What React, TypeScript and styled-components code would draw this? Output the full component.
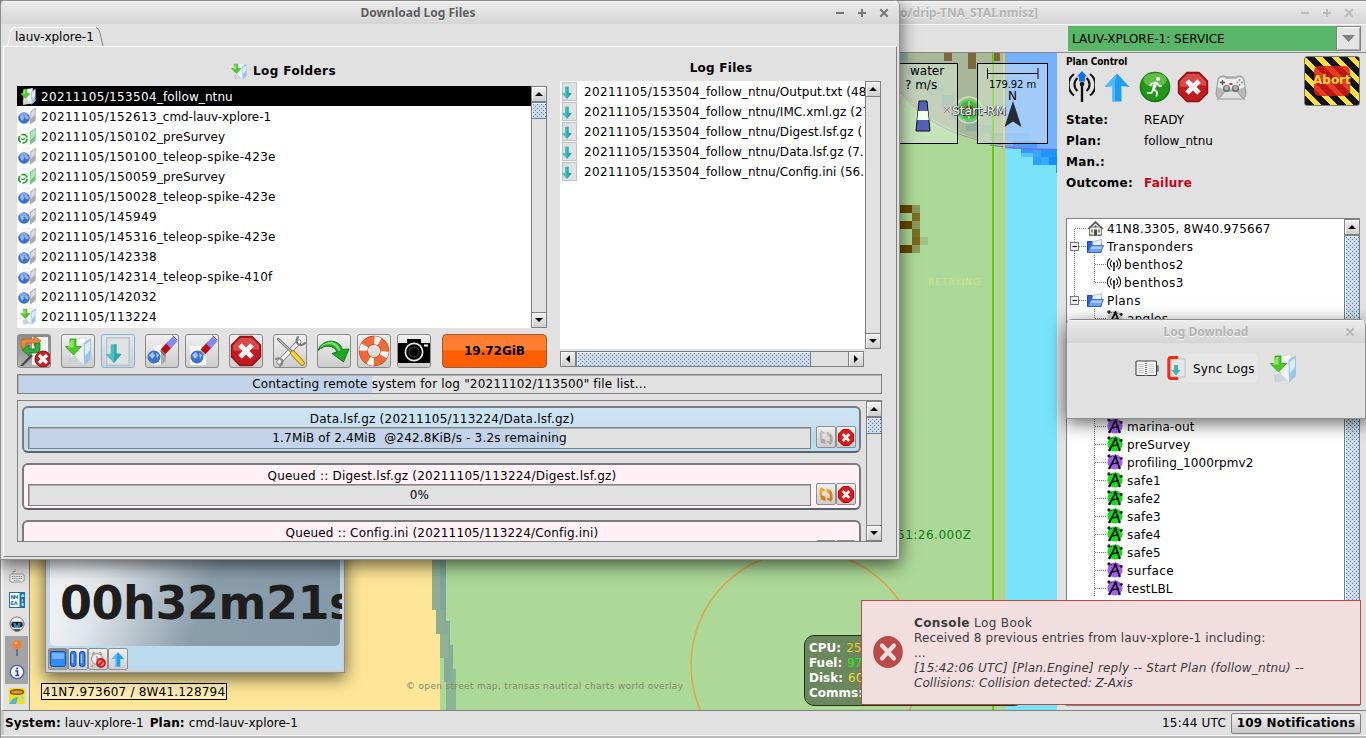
import React from "react";
import styled, { createGlobalStyle, css } from "styled-components";

const GlobalStyle = createGlobalStyle`
  html, body { margin: 0; padding: 0; }
  body {
    width: 1366px;
    height: 738px;
    overflow: hidden;
    font-family: "DejaVu Sans", sans-serif;
    font-size: 12px;
    color: #000;
  }
  *, *::before, *::after { box-sizing: border-box; }
  svg { display: block; flex: none; }
`;

/* A run of text with its own tracking. */
const Run = styled.span<{ $ls: number }>`
  padding-top: 2px;
  letter-spacing: ${(p) => p.$ls}px;
`;

/* ---------- window frames ---------- */

const Desktop = styled.div`
  position: relative;
  width: 1366px;
  height: 738px;
  overflow: hidden;
  background: #e1e1e1;
`;

const MainWindow = styled.div`
  display: grid;
  grid-template-rows: 24px 28px 658px 25px 3px;
  width: 1366px;
  height: 738px;
  border-left: 1px solid #8f8f8f;
`;

const TitleBar = styled.div`
  display: flex;
  align-items: center;
  height: 24px;
  border-top: 1px solid #8c8c8c;
  background: linear-gradient(#f6f6f6 0, #e9e9e9 2px, #d5d5d5 100%);
  font-family: "Noto Sans", "Open Sans", sans-serif;
  font-weight: 700;
  font-size: 12px;
  color: #b4b4b4;
  text-shadow: 0 1px 0 #f4f4f4;
  white-space: pre;
`;

const ActiveTitleBar = styled(TitleBar)`
  color: #5c5c5c;
`;

const TitleText = styled.span<{ $center?: number; $right?: number }>`
  ${(p) => p.$center && css`width: ${p.$center * 2}px; text-align: center;`}
  ${(p) => p.$right && css`width: ${p.$right}px; text-align: right;`}
  line-height: 22px;
  padding-top: 1px;
  flex: none;
`;

const TitleButtons = styled.div<{ $end: number }>`
  display: flex;
  gap: 12px;
  margin-left: auto;
  padding: 1px ${(p) => p.$end}px 0 0;
`;

const WinGlyph = ({ kind, color }: { kind: "min" | "max" | "close"; color: string }) => (
  <svg width="10" height="10" viewBox="0 0 10 10" stroke={color} strokeWidth="2" fill="none">
    {kind === "min" && <path d="M1 5H9" />}
    {kind === "max" && <path d="M1 5H9M5 1V9" />}
    {kind === "close" && <path d="M1.3 1.3L8.7 8.7M8.7 1.3L1.3 8.7" />}
  </svg>
);

const Float = styled.div<{ $x: number; $y: number; $w: number; $h: number }>`
  position: absolute;
  left: ${(p) => p.$x}px;
  top: ${(p) => p.$y}px;
  width: ${(p) => p.$w}px;
  height: ${(p) => p.$h}px;
`;

const DialogFrame = styled(Float)`
  border: 1px solid #8f8f8f;
  border-top: 0;
  border-radius: 6px 6px 0 0;
  overflow: hidden;
  background: #e1e1e1;
`;

const DialogShadow = styled(Float)`
  border-radius: 6px 6px 0 0;
  box-shadow: 0 5px 18px rgba(0, 0, 0, 0.62);
`;

/* ---------- scrollbars ---------- */

const Bar = styled.div<{ $dir: "v" | "h" }>`
  display: flex;
  flex-direction: ${(p) => (p.$dir === "v" ? "column" : "row")};
  ${(p) => (p.$dir === "v" ? "width: 16px;" : "height: 16px;")}
  flex: none;
  border: 1px solid #808080;
  background: #e1e1e1;
`;

const BarButton = styled.div`
  display: flex;
  align-items: center;
  justify-content: center;
  width: 14px;
  height: 14px;
  flex: none;
  background: linear-gradient(#f2f2f2, #cfcfcf);
  box-shadow: 0 0 0 1px #808080, inset 1px 1px 0 #fff;
`;

const Thumb = styled.div<{ $dir: "v" | "h"; $before: number; $size: number }>`
  flex: none;
  ${(p) =>
    p.$dir === "v"
      ? css`margin-top: ${p.$before}px; height: ${p.$size}px;`
      : css`margin-left: ${p.$before}px; width: ${p.$size}px;`}
  box-shadow: 0 0 0 1px #6d7f95, inset 1px 1px 0 #eef5fb;
  background-color: #cddbea;
  background-image:
    radial-gradient(circle at 1.5px 1.5px, #5f7b99 0.5px, transparent 0.7px),
    radial-gradient(circle at 3.5px 3.5px, #5f7b99 0.5px, transparent 0.7px);
  background-size: 4px 4px;
`;

const Spring = styled.div`
  flex: 1;
`;

const arrows = { up: "M0 4L4 0L8 4Z", down: "M0 0L8 0L4 4Z", left: "M4 0V8L0 4Z", right: "M0 0L4 4L0 8Z" };
const Arrow = ({ to }: { to: keyof typeof arrows }) => {
  const v = to === "up" || to === "down";
  return (
    <svg width={v ? 8 : 4} height={v ? 4 : 8}>
      <path d={arrows[to]} fill="#000" />
    </svg>
  );
};

const Scrollbar = ({ dir, before, size }: { dir: "v" | "h"; before: number; size: number }) => (
  <Bar $dir={dir}>
    <BarButton><Arrow to={dir === "v" ? "up" : "left"} /></BarButton>
    {size > 0 && <Thumb $dir={dir} $before={before} $size={size} />}
    <Spring />
    <BarButton><Arrow to={dir === "v" ? "down" : "right"} /></BarButton>
  </Bar>
);

/* ---------- icons ---------- */

const DownFolder = ({ w = 16, h = 17 }: { w?: number; h?: number }) => (
  <svg width={w} height={h} viewBox="0 0 26 29">
    <path d="M6 3L21 .5L20 26L5 28Z" fill="#fbfbfb" stroke="#d0d4d6" strokeWidth=".8" />
    <path d="M4 21L12 17L18 19V26L5 28Z" fill="#c4cacd" opacity=".8" />
    <path d="M12 3L20 6L19 28L11 20Z" fill="#eff1f2" />
    <path d="M18.500 6L26 1V22L19 28.500Z" fill="#9cc3e8" />
    <path d="M19.500 8L25 4V13L20 19Z" fill="#dcebf8" />
    <path d="M5 2H11V9.500H16.500L8.500 18L.3 9.500H5Z" fill="#4ec824" stroke="#2f9a12" strokeWidth=".8" />
    <path d="M6 3H8.500V10.500H3Z" fill="#a4ec7c" opacity=".8" />
  </svg>
);

const GlobeFolder = () => (
  <svg width="18" height="18" viewBox="0 0 18 18">
    <path d="M5 2L12 .5V17L5 17Z" fill="#f7f7f7" stroke="#e8e8e8" strokeWidth=".5" />
    <path d="M12 5L17.700 .5V13.500L12 17.800Z" fill="#ababab" />
    <path d="M12.500 6L17 2V8L12.500 12Z" fill="#dadada" />
    <circle cx="6" cy="11" r="5.800" fill="#3d73c6" />
    <ellipse cx="5.500" cy="8" rx="4" ry="2.300" fill="#8db3ea" opacity=".8" />
    <path d="M2 10L4.500 9L6 11.500L4 14ZM7.500 9L10.500 9.500L10 12.500L7.500 11.500Z" fill="#b9d0f2" opacity=".8" />
  </svg>
);

const SyncFolder = () => (
  <svg width="18" height="18" viewBox="0 0 18 18">
    <path d="M5 2L12 .5V17L5 17Z" fill="#f8faf8" stroke="#e6ebe6" strokeWidth=".5" />
    <path d="M12 5L17.700 .5V13.500L12 17.800Z" fill="#6fc580" />
    <path d="M12.500 6L17 2V9L12.500 13Z" fill="#b3e4ba" />
    <circle cx="5" cy="11.700" r="4.200" fill="#eefaee" stroke="#2c9a34" strokeWidth="1.700" strokeDasharray="7 1.800" />
    <path d="M2.500 10.500L4 13H6.300L7.500 10.500L5 12Z" fill="#2c9a34" />
  </svg>
);

const FileArrow = ({ w = 15, h = 19 }: { w?: number; h?: number }) => (
  <svg width={w} height={h} viewBox="0 0 23 28" preserveAspectRatio="none">
    <rect x=".7" y=".7" width="21.600" height="26.600" fill="#dfe1e2" stroke="#bcc0c4" strokeWidth="1.400" />
    <path d="M4.500 7H10V16L15 16.500L7.500 25L0 17L4.500 16Z" fill="#46c0c0" />
    <path d="M8 7H10V16L15 16.500L7.500 25Z" fill="#2fa6a8" />
  </svg>
);

const StopSign = ({ s = 32 }: { s?: number }) => (
  <svg width={s} height={s} viewBox="0 0 32 32">
    <path d="M10 1.500H22L30.500 10V22L22 30.500H10L1.500 22V10Z" fill="#c21a1f" stroke="#8f1216" strokeWidth="1.400" />
    <path d="M10.500 3H21.500L29 10.500V15C20 12 12 18 3 15V10.500Z" fill="#e25a5a" opacity=".75" />
    <path d="M10 10L22 22M22 10L10 22" stroke="#f4f4f4" strokeWidth="5" />
  </svg>
);

const SmallStop = () => (
  <svg width="16" height="17" viewBox="0 0 16 17">
    <path d="M5 .5H11L15.500 5V12L11 16.500H5L.5 12V5Z" fill="#e51515" stroke="#9e0a0a" />
    <path d="M4.800 5L11.200 12M11.200 5L4.800 12" stroke="#fff" strokeWidth="2.600" />
  </svg>
);

const Refresh = ({ color, dark }: { color: string; dark: string }) => (
  <svg width="16" height="17" viewBox="0 0 16 17" fill="none">
    <path d="M4.500 11.500A5 5 0 0 1 3.500 5" stroke={color} strokeWidth="2.800" />
    <path d="M.8 5.500L3 1L8 4.500Z" fill={color} />
    <path d="M8.500 2.500L13 4L12 8.500L8.500 6Z" fill={color} />
    <path d="M11.500 5.500A5 5 0 0 1 12.500 12" stroke={dark} strokeWidth="2.800" />
    <path d="M15.200 11.500L13 16L8 12.500Z" fill={dark} />
    <path d="M7.500 15L2.500 13.500L3.500 9L7.500 11Z" fill={dark} />
  </svg>
);

const Eraser = () => (
  <>
    <path d="M17 17L24 9" stroke="#c00d12" strokeWidth="6.500" />
    <path d="M22.500 11L29 4" stroke="#8484fb" strokeWidth="6.500" />
    <path d="M14 15.500L19 20.500M26.500 .8L31.500 5.200" stroke="#202060" strokeWidth=".8" />
  </>
);

const GlobeErase = ({ folder }: { folder: boolean }) => (
  <svg width="32" height="32" viewBox="0 0 32 32">
    <path d={folder ? "M8 12L16 9V29L8 30Z" : "M4 11H20V30H4Z"} fill="#f8f8f8" />
    {folder && <path d="M15 16L20 12V26L15 30Z" fill="#a9a9a9" />}
    <circle cx={folder ? 8 : 11} cy="22" r="6.500" fill="#3e73c4" />
    <path
      d={folder ? "M3 20L7 17L9 21L6 24ZM10 18L13 20L11 24Z" : "M6 20L10 17L12 21L9 24ZM13 18L16 20L14 24Z"}
      fill="#a4c2ef"
    />
    <Eraser />
  </svg>
);

const Tools = () => (
  <svg width="32" height="32" viewBox="0 0 32 32" fill="none" strokeLinecap="round">
    <path d="M5 27L25 7" stroke="#777" strokeWidth="5" />
    <path d="M5 27L25 7" stroke="#f2f2f2" strokeWidth="3.400" />
    <path d="M24 2A5.500 5.500 0 0 0 24 9A5.500 5.500 0 0 0 31 8" stroke="#777" strokeWidth="2" />
    <path d="M8 25A5 5 0 0 0 2 24M8 25A5 5 0 0 1 6 31" stroke="#888" strokeWidth="2" />
    <path d="M4 4L18 17" stroke="#777" strokeWidth="2.600" />
    <path d="M4 4L18 17" stroke="#ddd" strokeWidth="1" />
    <path d="M19 18L28 28" stroke="#a87308" strokeWidth="5.500" />
    <path d="M19 18L28 28" stroke="#ffc928" strokeWidth="4" />
    <path d="M18.500 18.500L27 28" stroke="#fff2a8" strokeWidth="1" />
  </svg>
);

const GreenTurn = () => (
  <svg width="34" height="32" viewBox="0 0 34 32">
    <path d="M1 15.500C5 3.500 22 3 25.500 14.500L32 14L26.500 27L15 18.500L20 17C17 10 8 9 1 15.500Z" fill="#1fa827" stroke="#14781a" />
    <path d="M2.500 13.500C8 5 20 4.500 23.500 15L21.500 16C17 7 9 8 2.500 13.500Z" fill="#7fdc70" />
  </svg>
);

const LifeRing = () => (
  <svg width="32" height="32" viewBox="0 0 32 32" fill="none">
    <circle cx="16" cy="16" r="10.700" stroke="#b64e25" strokeWidth="9" />
    <circle cx="16" cy="16" r="10.700" stroke="#ee6a39" strokeWidth="7.600" />
    <circle
      cx="16" cy="16" r="10.700" stroke="#fafafa" strokeWidth="8"
      strokeDasharray="5.400 11.400" strokeDashoffset="2.700" transform="rotate(15 16 16)"
    />
  </svg>
);

const Camera = () => (
  <svg width="34" height="32" viewBox="0 0 34 32">
    <path d="M1 8H10V4H24V8H33V28H1Z" fill="#000" />
    <path d="M27 10.500H31" stroke="#fff" strokeWidth="2" />
    <circle cx="17" cy="17" r="9.500" fill="#e8e8e8" />
    <circle cx="17" cy="17" r="7.800" fill="#000" />
    <circle cx="17" cy="17" r="5" fill="none" stroke="#444" strokeWidth="1" />
  </svg>
);

const SwapOff = () => (
  <svg width="32" height="32" viewBox="0 0 32 32">
    <path d="M14 2H30V30H14Z" fill="#f3f3f3" />
    <path d="M2 31L13 19L15 21L5 31Z" fill="#4c4c4c" />
    <path d="M3 13V6Q4 4 8 4H16V1L23 6L16 11V8H8V13Z" fill="#e9883b" stroke="#b55f1c" strokeWidth=".8" />
    <path d="M22 8V15Q21 18 17 18H11V21L4 15L11 10V14H17V8Z" fill="#2fae3b" stroke="#187a22" strokeWidth=".8" />
    <circle cx="25" cy="24" r="8" fill="#cc1b22" stroke="#991015" />
    <path d="M21 20L29 28M29 20L21 28" stroke="#fff" strokeWidth="3.400" />
  </svg>
);

const Antenna = ({ arrow }: { arrow?: boolean }) => (
  <svg
    width={arrow ? 26 : 14} height={arrow ? 32 : 14}
    viewBox={arrow ? "0 0 26 32" : "0 0 26 28"} fill="none" stroke="#111"
  >
    <path d="M13 13V31" strokeWidth={arrow ? 2.4 : 3} />
    <circle cx="13" cy="13" r="2.300" fill="#111" stroke="none" />
    <path d="M8.500 7A8.500 8.500 0 0 0 8.500 20M17.500 7A8.500 8.500 0 0 1 17.500 20" strokeWidth="2.100" />
    <path d="M5 3A13.500 13.500 0 0 0 5 24.500M21 3A13.500 13.500 0 0 1 21 24.500" strokeWidth="2.100" />
    {arrow && <path d="M13 0L18 5.500H16V10.500H10V5.500H8Z" fill="#0b6ff0" stroke="none" />}
  </svg>
);

const UpArrow = ({ w = 26, h = 29 }: { w?: number; h?: number }) => (
  <svg width={w} height={h} viewBox="0 0 26 29">
    <path d="M13 .5L25.500 14L17.500 13V28.500H8.500V13L.5 14Z" fill="#1f9df2" />
    <path d="M13 .5L.5 14L8.500 13V28.500H11V8Z" fill="#4fbcfa" />
  </svg>
);

const Runner = () => (
  <svg width="32" height="32" viewBox="0 0 32 32">
    <circle cx="16" cy="16" r="15.300" fill="#14780d" />
    <circle cx="16" cy="15.500" r="14" fill="#23961a" />
    <ellipse cx="16" cy="9" rx="11.500" ry="7" fill="#7acb5e" opacity=".7" />
    <circle cx="19" cy="8" r="2" fill="#fff" />
    <path d="M17.500 11L14.500 18L18 21L17.500 25.500M14.500 18L12.500 22H8M17.500 11.500L12.500 12.500L11 15M18 12L20.500 15H23" stroke="#fff" strokeWidth="1.700" fill="none" />
    <path d="M17 11L14.500 18" stroke="#fff" strokeWidth="3" />
  </svg>
);

const Gamepad = () => (
  <svg width="32" height="28" viewBox="0 0 32 28">
    <path d="M3 7C3 3 9 2 11 4H21C23 2 29 3 29 7L31 20C31 26 27 26 25 22L22 18H10L7 22C5 26 1 26 1 20Z" fill="#b9b9b9" stroke="#8c8c8c" strokeWidth=".8" />
    <path d="M4 7C5 4 9 4 11 6H21C23 4 27 4 28 7L29.500 14L24 16H8L2.500 14Z" fill="#efefef" />
    <circle cx="11.500" cy="15.500" r="3.600" fill="#707070" />
    <circle cx="20.500" cy="15.500" r="3.600" fill="#707070" />
    <circle cx="11.500" cy="15" r="2.200" fill="#b4b4b4" />
    <circle cx="20.500" cy="15" r="2.200" fill="#b4b4b4" />
    <path d="M5 9.500H10M7.500 7V12" stroke="#555" strokeWidth="1.400" />
    <path d="M24.500 6V8M24.500 11V13M21.500 9.500H23M26 9.500H28" stroke="#888" strokeWidth="1.600" />
    <rect x="14.500" y="10" width="3" height="2" fill="#c33" />
    <path d="M2 26H30" stroke="#777" strokeWidth="2" opacity=".35" />
  </svg>
);

const House = () => (
  <svg width="17" height="16" viewBox="0 0 17 16">
    <rect x="2.500" y="7" width="12" height="8.500" fill="#ecece6" stroke="#6b6b66" strokeWidth=".8" />
    <path d="M.5 8.500L8.500 .8L16.500 8.500L15 9.500L8.500 3.500L2 9.500Z" fill="#5e605e" />
    <rect x="7" y="9.500" width="3" height="6" fill="#4d4d4d" />
    <rect x="4" y="9.500" width="2" height="3" fill="#86966f" />
    <rect x="11" y="9.500" width="2" height="3" fill="#86966f" />
    <circle cx="8.500" cy="6.300" r="1.100" fill="#555" />
    <path d="M2 15H6M11 15H15" stroke="#587a3b" />
  </svg>
);

const FolderOpen = () => (
  <svg width="17" height="14" viewBox="0 0 17 14">
    <path d="M.5 13.500V2.500H5L6.500 4H14V13.500Z" fill="#2f63d8" stroke="#1e49ae" />
    <path d="M6 2.500L14.500 .5L14 7H5Z" fill="#e8f0fc" stroke="#7f9fd8" strokeWidth=".6" />
    <path d="M.8 13.500L4 6.500H16.500L13.500 13.500Z" fill="#6fa4f2" stroke="#2d62cc" strokeWidth=".8" />
    <path d="M4.500 7.500H15L14 10H3.500Z" fill="#a9cbfa" />
  </svg>
);

const PlanIcon = ({ color }: { color: string }) => (
  <svg width="16" height="16" viewBox="0 0 16 16" fill="none">
    <circle cx="8" cy="8" r="7.600" fill={color} />
    <path d="M2.500 14L8.500 2.500L12.500 14M5 10L12 8.500" stroke="#111" strokeWidth="1.700" />
    <path d="M2 2L8 3L14 4.500" stroke="#111" strokeWidth=".7" strokeDasharray="1 1" />
    <circle cx="2" cy="2" r="1.700" fill="#222" />
    <circle cx="14.300" cy="4.500" r="1.400" fill="#222" />
    <circle cx="2.500" cy="14" r="1.300" fill="#111" />
    <circle cx="12.500" cy="14" r="1.200" fill="#111" />
    <circle cx="8.500" cy="2.500" r="1.100" fill="#111" />
  </svg>
);

const BookIcon = () => (
  <svg width="24" height="17" viewBox="0 0 24 17" fill="none" stroke="#444">
    <rect x="1" y="1" width="20.500" height="14.500" rx="1" fill="#f8f8f8" strokeWidth="1.100" />
    <path d="M11 1V16" strokeWidth="2.400" strokeDasharray="1 1" stroke="#777" />
    <path d="M3 4.500H9M3 6.500H9M3 8.500H9M3 10.500H9M3 12.500H9M13.500 4.500H19M13.500 6.500H19M13.500 8.500H19M13.500 10.500H19M13.500 12.500H19" stroke="#bdbdbd" strokeWidth=".8" />
    <path d="M21.500 6H23V11H21.500" strokeWidth="1.100" />
  </svg>
);

const SyncIcon = () => (
  <svg width="19" height="24" viewBox="0 0 19 24">
    <rect x="4" y="3" width="14" height="18" fill="#e3e7e8" stroke="#b9bcbe" />
    <path d="M11 1.500H4Q1.800 1.500 1.800 4V20Q1.800 22.500 4 22.500H11" fill="none" stroke="#fb2510" strokeWidth="3" />
    <path d="M7 9H11V14H13.500L9 19.500L4.500 14H7Z" fill="#3cb4b4" />
  </svg>
);

/* ---------- download dialog ---------- */

const DialogBody = styled.div`
  display: flex;
  flex-direction: column;
  height: 533px;
  margin: 0 2px 2px;
`;

const TabStrip = styled.div`
  display: flex;
  align-items: flex-end;
  height: 22px;
  padding-left: 3px;
`;

const Tab = styled.div`
  position: relative;
  width: 98px;
  height: 19px;
  padding-left: 9px;
  line-height: 20px;
`;

const TabOutline = styled.svg`
  position: absolute;
  left: 0;
  top: 0;
`;

const Pane = styled.div`
  flex: 1;
  display: flex;
  flex-direction: column;
  border: 1px solid;
  border-color: #fff #808080 #808080 #fff;
  padding: 0 14px 0 13px;
`;

const Columns = styled.div`
  display: grid;
  grid-template-columns: 530px 321px;
  column-gap: 13px;
  height: 321px;
`;

const LeftColumn = styled.div`
  display: flex;
  flex-direction: column;
  padding-top: 10px;
`;

const RightColumn = styled.div`
  display: flex;
  flex-direction: column;
  padding-top: 11px;
`;

const Heading = styled.div<{ $h: number; $below: number; $ls: number; $shift: number }>`
  display: flex;
  align-items: center;
  justify-content: center;
  gap: 6px;
  height: ${(p) => p.$h}px;
  margin-bottom: ${(p) => p.$below}px;
  padding-left: ${(p) => p.$shift}px;
  font-weight: 700;
  letter-spacing: ${(p) => p.$ls}px;
`;

const ListBox = styled.div<{ $h: number }>`
  display: flex;
  height: ${(p) => p.$h}px;
`;

const ListView = styled.div`
  flex: 1;
  min-width: 0;
  overflow: hidden;
  background: #fff;
`;

const ListRow = styled.div<{ $selected?: boolean }>`
  display: flex;
  align-items: center;
  height: 20px;
  white-space: pre;
  background: ${(p) => (p.$selected ? "#000" : "#fff")};
  color: ${(p) => (p.$selected ? "#fff" : "#000")};
`;

const IconSlot = styled.div<{ $w: number; $left?: number }>`
  display: flex;
  flex: none;
  width: ${(p) => p.$w}px;
  padding-left: ${(p) => p.$left ?? 0}px;
`;

const ToolRow = styled.div`
  display: flex;
  height: 34px;
  margin-top: 6px;
`;

const ToolButton = styled.div<{ $before?: number; $look?: "dark" | "blue" }>`
  display: flex;
  align-items: center;
  justify-content: center;
  width: 34px;
  height: 34px;
  flex: none;
  margin-left: ${(p) => p.$before ?? 0}px;
  border: 1px solid ${(p) => (p.$look === "blue" ? "#8fb2c8" : "#8a8a8a")};
  border-radius: 3px;
  overflow: hidden;
  background: ${(p) =>
    p.$look === "dark"
      ? "linear-gradient(#8b8b8b, #b3b3b3)"
      : p.$look === "blue"
        ? "linear-gradient(#dbe8f0, #c5d5df)"
        : "linear-gradient(#f0f0f0, #cdcdcd)"};
`;

const SizeButton = styled.div`
  width: 106px;
  height: 34px;
  margin-left: 11px;
  border: 1px solid #9a5a34;
  border-radius: 4px;
  background: linear-gradient(#ff7a2c 0, #ff8136 45%, #ff5f00 50%, #ff5f00 100%);
  font-weight: 700;
  text-align: center;
  line-height: 33px;
`;

const Progress = styled.div<{ $w: number; $h: number; $fill: number; $ls: number }>`
  width: ${(p) => p.$w}px;
  height: ${(p) => p.$h}px;
  border: 1px solid #808080;
  box-shadow: inset 1px 1px 0 #b0b0b0;
  background: linear-gradient(#c3d3ea, #c3d3ea) 1px 1px / ${(p) => p.$fill}px 100% no-repeat #e1e1e1;
  text-align: center;
  line-height: ${(p) => p.$h - 2}px;
  letter-spacing: ${(p) => p.$ls}px;
  white-space: pre;
`;

const QueueBox = styled.div`
  display: flex;
  height: 142px;
  margin-top: 6px;
  border: 1px solid #808080;
  border-right: 0;
`;

const QueueList = styled.div`
  flex: 1;
  overflow: hidden;
  padding: 5px 5px 0 4px;
`;

const QueueItem = styled.div<{ $active?: boolean }>`
  height: 47px;
  margin-bottom: 10px;
  border: 2px solid #7b7b7f;
  border-bottom-color: #5e6268;
  border-radius: 6px;
  padding: 2px 3px 0 4px;
  background: ${(p) =>
    p.$active ? "linear-gradient(#cde4f4 0, #c9e1f2 45%, #b8d9ec 60%, #bddff2 100%)" : "#fff1f5"};
`;

const QueueTitle = styled.div<{ $ls: number }>`
  height: 17px;
  line-height: 19px;
  text-align: center;
  letter-spacing: ${(p) => p.$ls}px;
`;

const QueueLine = styled.div`
  display: flex;
`;

const QueueButtons = styled.div`
  display: flex;
  margin-left: 5px;
  margin-top: -1px;
`;

const MiniButton = styled.div<{ $pressed?: boolean }>`
  display: flex;
  align-items: center;
  justify-content: center;
  width: 20px;
  height: 22px;
  border: 1px solid #8f8f8f;
  border-radius: 2px;
  background: ${(p) =>
    p.$pressed ? "linear-gradient(#858585, #a8a8a8)" : "linear-gradient(#f0f0f0, #cdcdcd)"};
`;

const HBarRow = styled.div`
  width: 304px;
  padding-top: 2px;
`;

const ProgressRow = styled.div`
  padding-top: 6px;
`;

type FolderState = "down" | "remote" | "sync";
const folderIcons: Record<FolderState, React.ReactNode> = {
  down: <IconSlot $w={24} $left={3}><DownFolder /></IconSlot>,
  remote: <IconSlot $w={24} $left={1}><GlobeFolder /></IconSlot>,
  sync: <IconSlot $w={24} $left={1}><SyncFolder /></IconSlot>,
};

/* state, time stamp, suffix, suffix tracking */
const folders: [FolderState, string, string, number][] = [
  ["down", "20211105/153504", "_follow_ntnu", 0.08],
  ["remote", "20211105/152613", "_cmd-lauv-xplore-1", -0.05],
  ["sync", "20211105/150102", "_preSurvey", 0.1],
  ["remote", "20211105/150100", "_teleop-spike-423e", 0.28],
  ["sync", "20211105/150059", "_preSurvey", 0.1],
  ["remote", "20211105/150028", "_teleop-spike-423e", 0.28],
  ["remote", "20211105/145949", "", 0],
  ["remote", "20211105/145316", "_teleop-spike-423e", 0.28],
  ["remote", "20211105/142338", "", 0],
  ["remote", "20211105/142314", "_teleop-spike-410f", 0.28],
  ["remote", "20211105/142032", "", 0],
  ["down", "20211105/113224", "", 0],
];

const files: [string, number][] = [
  ["/Output.txt (48", 0.05],
  ["/IMC.xml.gz (27", 0.05],
  ["/Digest.lsf.gz (", 0.05],
  ["/Data.lsf.gz (7.", 0.05],
  ["/Config.ini (56.", 0],
];

const queue = [
  {
    title: "Data.lsf.gz (20211105/113224/Data.lsf.gz)", titleLs: 0.25,
    text: "1.7MiB of 2.4MiB  @242.8KiB/s - 3.2s remaining", fill: 530, active: true,
  },
  { title: "Queued :: Digest.lsf.gz (20211105/113224/Digest.lsf.gz)", titleLs: 0.22, text: "0%", fill: 0 },
  { title: "Queued :: Config.ini (20211105/113224/Config.ini)", titleLs: 0.18, text: "0%", fill: 0 },
];

const DownloadDialog = () => (
  <>
    <DialogShadow $x={0} $y={0} $w={900} $h={560} />
    <DialogFrame $x={0} $y={0} $w={900} $h={560}>
      <ActiveTitleBar>
        <TitleText $center={417}>Download Log Files</TitleText>
        <TitleButtons $end={12}>
          <WinGlyph kind="min" color="#777" />
          <WinGlyph kind="max" color="#777" />
          <WinGlyph kind="close" color="#777" />
        </TitleButtons>
      </ActiveTitleBar>
      <DialogBody>
        <TabStrip>
          <Tab>
            <TabOutline width="98" height="20" fill="none">
              <path d="M0 19.500Q2 19 3 12L5 3Q6 .5 9 .5H90" stroke="#fff" />
              <path d="M90 .5Q93 1 94 6L97 19" stroke="#808080" />
            </TabOutline>
            lauv-xplore-1
          </Tab>
        </TabStrip>
        <Pane>
          <Columns>
            <LeftColumn>
              <Heading $h={28} $below={1} $ls={0.4} $shift={3}>
                <DownFolder />
                Log Folders
              </Heading>
              <ListBox $h={242}>
                <ListView>
                  {folders.map(([state, stamp, suffix, ls], i) => (
                    <ListRow key={stamp} $selected={i === 0}>
                      {folderIcons[state]}
                      <Run $ls={0.33}>{stamp}</Run>
                      <Run $ls={ls}>{suffix}</Run>
                    </ListRow>
                  ))}
                </ListView>
                <Scrollbar dir="v" before={2} size={15} />
              </ListBox>
              <ToolRow>
                <ToolButton $look="dark"><SwapOff /></ToolButton>
                <ToolButton $before={10}><DownFolder w={26} h={29} /></ToolButton>
                <ToolButton $before={6} $look="blue"><FileArrow w={24} h={29} /></ToolButton>
                <ToolButton $before={10}><GlobeErase folder /></ToolButton>
                <ToolButton $before={6}><GlobeErase folder={false} /></ToolButton>
                <ToolButton $before={10}><StopSign /></ToolButton>
                <ToolButton $before={10}><Tools /></ToolButton>
                <ToolButton $before={10}><GreenTurn /></ToolButton>
                <ToolButton $before={6}><LifeRing /></ToolButton>
                <ToolButton $before={6}><Camera /></ToolButton>
                <SizeButton>19.72GiB</SizeButton>
              </ToolRow>
            </LeftColumn>
            <RightColumn>
              <Heading $h={20} $below={3} $ls={0.25} $shift={1}>Log Files</Heading>
              <ListBox $h={268}>
                <ListView>
                  {files.map(([name, ls]) => (
                    <ListRow key={name}>
                      <IconSlot $w={24} $left={2}><FileArrow /></IconSlot>
                      <Run $ls={0.33}>20211105/153504</Run>
                      <Run $ls={0.08}>_follow_ntnu</Run>
                      <Run $ls={ls}>{name}</Run>
                    </ListRow>
                  ))}
                </ListView>
                <Scrollbar dir="v" before={0} size={0} />
              </ListBox>
              <HBarRow>
                <Scrollbar dir="h" before={2} size={233} />
              </HBarRow>
            </RightColumn>
          </Columns>
          <ProgressRow>
            <Progress $w={865} $h={20} $fill={353} $ls={0.19}>
              Contacting remote system for log "20211102/113500" file list...
            </Progress>
          </ProgressRow>
          <QueueBox>
            <QueueList>
              {queue.map((q) => (
                <QueueItem key={q.title} $active={q.active}>
                  <QueueTitle $ls={q.titleLs}>{q.title}</QueueTitle>
                  <QueueLine>
                    <Progress $w={783} $h={22} $fill={q.fill} $ls={0.17}>{q.text}</Progress>
                    <QueueButtons>
                      <MiniButton>
                        <Refresh color={q.active ? "#bdbdbd" : "#f2a32b"} dark={q.active ? "#a8a8a8" : "#d97f16"} />
                      </MiniButton>
                      <MiniButton><SmallStop /></MiniButton>
                    </QueueButtons>
                  </QueueLine>
                </QueueItem>
              ))}
            </QueueList>
            <Scrollbar dir="v" before={2} size={15} />
          </QueueBox>
        </Pane>
      </DialogBody>
    </DialogFrame>
  </>
);

/* ---------- map ---------- */

const MapArea = styled.div`
  position: relative;
  overflow: hidden;
  height: 658px;
  border-top: 1px solid #888;
`;

type Px = [number, number, number, number, string];

const shore: Px[] = [
  [402, 500, 8, 57, "#8fae92"],
  [410, 500, 6, 68, "#7fa69a"],
  [406, 557, 8, 24, "#8cad94"],
  [414, 568, 6, 24, "#86ab99"],
  [410, 581, 8, 24, "#93b294"],
  [418, 592, 5, 24, "#88ad97"],
  [414, 605, 8, 24, "#86ab98"],
  [422, 616, 4, 24, "#8db297"],
  [416, 629, 10, 29, "#8db595"],
];

const coast: Px[] = [
  [870, 0, 8, 8, "#8aae9e"],
  [878, 14, 10, 8, "#8fb0a0"],
  [888, 24, 10, 8, "#9ab8a4"],
  [898, 34, 16, 8, "#98b6a2"],
  [912, 42, 12, 16, "#8fb09a"],
  [920, 50, 16, 16, "#94b49c"],
  [936, 62, 12, 16, "#8eae9c"],
  [948, 72, 16, 8, "#97b79c"],
  [960, 80, 24, 8, "#93b39b"],
  [972, 88, 16, 8, "#9abb9e"],
];

const deep: Px[] = [
  [975, 80, 24, 8, "#68abff"],
  [983, 88, 24, 8, "#4a9cff"],
  [975, 88, 8, 8, "#74b1ff"],
  [991, 96, 36, 8, "#5cc0ff"],
  [991, 96, 16, 4, "#3399ff"],
  [1003, 96, 12, 8, "#39a5ff"],
  [1003, 104, 8, 8, "#2ba2ff"],
  [1011, 96, 16, 8, "#1c95ff"],
  [1011, 104, 16, 8, "#37a9ff"],
  [1019, 104, 8, 8, "#0f90ff"],
  [1026, 112, 1, 8, "#1c95ff"],
];

const digitBlocks: Px[] = [
  [868, 152, 14, 8, "#6a4800"],
  [882, 152, 8, 8, "#8b9a57"],
  [882, 160, 8, 8, "#7b7020"],
  [868, 168, 14, 8, "#6a4800"],
  [882, 168, 8, 8, "#8b9a57"],
  [882, 176, 8, 8, "#7b7020"],
  [882, 184, 8, 8, "#7b6a1c"],
  [890, 184, 8, 8, "#a0c480"],
  [868, 192, 14, 8, "#6a4800"],
  [882, 192, 8, 8, "#8b9a57"],
];

const signBlocks: Px[] = [
  [914, 0, 8, 8, "#7e6641"],
  [938, 0, 8, 16, "#7e6641"],
  [963, 0, 7, 8, "#7e6641"],
];

const Blocks = ({ items }: { items: Px[] }) => (
  <>
    {items.map(([x, y, w, h, c], i) => (
      <rect key={i} x={x} y={y} width={w} height={h} fill={c} shapeRendering="crispEdges" />
    ))}
  </>
);

const Chart = () => (
  <svg width="1027" height="657" viewBox="0 0 1027 657" fontFamily="DejaVu Sans, sans-serif">
    <rect width="1027" height="657" fill="#fde697" />
    <rect x="410" width="566" height="657" fill="#add998" />
    <Blocks items={shore} />
    <rect x="975" width="52" height="657" fill="#79e3fc" />
    <rect x="975" width="52" height="96" fill="#74b1ff" />
    <path d="M860 0H975V92Q905 80 866 36Z" fill="#a8b899" />
    <Blocks items={coast} />
    <Blocks items={deep} />
    <path d="M860 25C890 70 930 94 1027 96.500" fill="none" stroke="#a58cab" strokeWidth="1" />
    <path d="M960 92C980 95 1000 96.500 1027 96.500" fill="none" stroke="#5a6af0" strokeWidth="1" />
    <Blocks items={signBlocks} />
    <rect x="962" width="2" height="657" fill="#66cc0a" />
    <rect x="973" width="2" height="657" fill="#d3cc55" />
    <Blocks items={digitBlocks} />
    <circle cx="775" cy="612" r="114" fill="none" stroke="#d9a94e" strokeWidth="1.600" />
    <text x="898" y="232" fontSize="9" fill="#cde08f" textLength="52">RETRYING</text>
    <text x="867" y="486" fontSize="12" fill="#0c7d10" textLength="74">51:26.000Z</text>
    <text x="376" y="636" fontSize="9" fill="#84886a" textLength="277">© open street map, transas nautical charts world overlay</text>
    <g fill="none">
      <circle cx="939" cy="57" r="13" stroke="#c9f0c4" strokeWidth="1.500" opacity=".8" />
      <circle cx="939" cy="57" r="10" fill="#2fae2b" opacity=".75" />
      <circle cx="939" cy="57" r="9.500" stroke="#3fe03a" strokeWidth="1.500" />
      <circle cx="939" cy="57" r="4.500" fill="#0d6b10" stroke="#c04a20" />
      <path d="M930 57H948M939 48V66" stroke="#d8f5d5" />
      <circle cx="917" cy="57" r="4.500" stroke="#e39a90" />
      <path d="M914 54L920 60M920 54L914 60" stroke="#555" />
    </g>
  </svg>
);

const Gauges = styled.div`
  position: absolute;
  left: 868px;
  top: 10px;
  display: flex;
  gap: 19px;
`;

const Gauge = styled.div<{ $w: number }>`
  display: flex;
  flex-direction: column;
  align-items: center;
  width: ${(p) => p.$w}px;
  height: 81px;
  border: 1px solid #000;
  background: rgba(238, 248, 240, 0.38);
`;

const WaterText = styled.div<{ $left: number }>`
  align-self: flex-start;
  padding-left: ${(p) => p.$left}px;
  line-height: 14px;
`;

const Lighthouse = styled.svg`
  margin: 8px 11px 0 0;
`;

const ScaleText = styled.div`
  font-size: 10px;
  line-height: 12px;
  letter-spacing: -0.1px;
`;

const NorthMark = styled.div`
  line-height: 10px;
`;

const StartLabel = styled.div`
  position: absolute;
  left: 922px;
  top: 50px;
  line-height: 16px;
  color: #fff;
  letter-spacing: 0.2px;
  text-shadow: 0 0 1px #333, 1px 1px 0 #444, -1px 0 0 #555;
`;

const PositionBox = styled.div`
  position: absolute;
  left: 11px;
  top: 630px;
  width: 186px;
  height: 17px;
  border: 1px solid #000;
  background: rgba(255, 255, 255, 0.3);
  text-align: center;
  line-height: 16px;
  letter-spacing: 0.2px;
  white-space: nowrap;
`;

const StatsBox = styled.div`
  position: absolute;
  left: 774px;
  top: 582px;
  width: 220px;
  height: 71px;
  padding: 5px 4px;
  border: 1px solid #1d3319;
  border-radius: 10px;
  background: #6a875d;
  color: #fff;
  font-weight: 700;
  line-height: 15px;
`;

const StatValue = styled.span<{ $color: string }>`
  margin-left: 5px;
  font-weight: 400;
  color: ${(p) => p.$color};
`;

const TimerWindow = styled.div`
  position: absolute;
  left: 15px;
  top: 400px;
  width: 300px;
  height: 220px;
  border: 1px solid #8f8f8f;
  padding: 0 2px 2px 2px;
  background: #d0d0d0;
  box-shadow: 0 5px 16px rgba(0, 0, 0, 0.6);
`;

const TimerInner = styled.div`
  display: flex;
  flex-direction: column;
  height: 216px;
  overflow: hidden;
  padding: 0 2px 0 0;
  background: #bcdbef;
`;

const TimerFace = styled.div`
  flex: 1;
  display: flex;
  align-items: flex-end;
  margin-left: 2px;
  padding: 0 0 16px 10px;
  border-radius: 0 0 5px 5px;
  background: linear-gradient(110deg, #edf1f4 18%, #dfe5e9 28%, #8a9dab 58%, #8499a8 100%);
  font-size: 46px;
  font-weight: 700;
  line-height: 54px;
  letter-spacing: -0.45px;
  color: #1e1e1e;
  white-space: nowrap;
`;

const TimerButtons = styled.div`
  display: flex;
  padding: 2px 0 0;
`;

const StopSquare = () => (
  <svg width="16" height="16">
    <rect x=".5" y=".5" width="15" height="15" rx="2" fill="#2f8cf5" stroke="#1c4fae" />
    <rect x="2" y="2" width="12" height="6" rx="1" fill="#8dc5ff" opacity=".7" />
  </svg>
);

const PauseBars = () => (
  <svg width="16" height="16" fill="#2f7ff0" stroke="#1c46a8">
    <rect x=".5" y=".5" width="5.500" height="15" rx="2" />
    <rect x="9.500" y=".5" width="5.500" height="15" rx="2" />
    <path d="M2.500 3V12M11.500 3V12" stroke="#9accff" strokeWidth="1.500" />
  </svg>
);

const ClockOff = () => (
  <svg width="16" height="18" viewBox="0 0 16 18" fill="none">
    <circle cx="7" cy="9" r="5.500" fill="#ececec" stroke="#aaa" strokeWidth="1.400" />
    <path d="M2 4.500L4.500 2M12 4.500L9.500 2M3 15L2 17M7 6V9H9" stroke="#999" strokeWidth="1.400" />
    <circle cx="11" cy="13" r="4" fill="#e88" stroke="#d01818" strokeWidth="1.800" />
    <path d="M8.500 15.500L13.500 10.500" stroke="#d01818" strokeWidth="1.800" />
  </svg>
);

const MapView = () => (
  <MapArea>
    <Chart />
    <Gauges>
      <Gauge $w={60}>
        <WaterText $left={11}>water</WaterText>
        <WaterText $left={6}>? m/s</WaterText>
        <Lighthouse width="16" height="32" viewBox="0 0 16 32">
          <path d="M4 1H12L15 31H1Z" fill="#555fb8" stroke="#111" />
          <path d="M3.200 11H12.800L13.800 20H2.200Z" fill="#f0fbe8" />
        </Lighthouse>
      </Gauge>
      <Gauge $w={71}>
        <svg width="52" height="15" viewBox="0 0 52 15" stroke="#000">
          <path d="M.5 4V15M51 4V15M.5 9.500H51" />
        </svg>
        <ScaleText>179.92 m</ScaleText>
        <NorthMark>N</NorthMark>
        <svg width="18" height="26" viewBox="0 0 18 26"><path d="M9 0L17.500 26L9 20.500L.5 26Z" fill="#252c36" /></svg>
      </Gauge>
    </Gauges>
    <StartLabel>Start-RM</StartLabel>
    <TimerWindow>
      <TimerInner>
        <TimerFace>00h32m21s</TimerFace>
        <TimerButtons>
          <MiniButton $pressed><StopSquare /></MiniButton>
          <MiniButton><PauseBars /></MiniButton>
          <MiniButton><ClockOff /></MiniButton>
          <MiniButton><UpArrow w={14} h={15} /></MiniButton>
        </TimerButtons>
      </TimerInner>
    </TimerWindow>
    <PositionBox>41N7.973607 / 8W41.128794</PositionBox>
    <StatsBox>
      CPU:<StatValue $color="#f0c830">25%</StatValue><br />
      Fuel:<StatValue $color="#22ee22">97%</StatValue><br />
      Disk:<StatValue $color="#e8e030">60%</StatValue><br />
      Comms:
    </StatsBox>
  </MapArea>
);

/* ---------- side toolbar ---------- */

const SideBar = styled.div`
  display: flex;
  flex-direction: column;
  justify-content: flex-end;
  padding: 0 1px 2px 4px;
  border-right: 1px solid #808080;
  border-left: 2px solid #f4f4f4;
  background: #e1e1e1;
`;

const SideButton = styled.div<{ $on?: boolean }>`
  display: flex;
  align-items: center;
  justify-content: center;
  height: 24px;
  margin-left: -2px;
  background: ${(p) => (p.$on ? "#a3a3a3" : "transparent")};
`;

const SideTools = () => (
  <SideBar>
    <SideButton>
      <svg width="16" height="16" viewBox="0 0 16 16" fill="none" stroke="#999">
        <rect x=".8" y="6" width="14.400" height="8" rx="2" fill="#eee" />
        <path d="M3 8.500H13M3 10.500H13M5 12.300H11" strokeDasharray="1 .8" stroke="#777" />
        <path d="M4 6V3.500H6V1" />
      </svg>
    </SideButton>
    <SideButton>
      <svg width="16" height="16" viewBox="0 0 16 16" fontFamily="DejaVu Sans" fontWeight="700">
        <rect width="16" height="16" fill="#1874a8" />
        <rect x="1" y="1" width="9.500" height="14" fill="#fff" />
        <text x="1.500" y="7" fontSize="5" fill="#1874a8" textLength="8">NM</text>
        <text x="1.500" y="13" fontSize="5" fill="#1874a8" textLength="7">EA</text>
        <text x="12" y="5" fontSize="4" fill="#fff">A</text>
        <text x="12.500" y="9.500" fontSize="4" fill="#fff">I</text>
        <text x="12" y="14" fontSize="4" fill="#fff">S</text>
      </svg>
    </SideButton>
    <SideButton>
      <svg width="16" height="16" viewBox="0 0 16 16">
        <circle cx="8" cy="8" r="7" fill="#f1f1f1" stroke="#777" />
        <rect x=".5" y="5.500" width="15" height="4.500" rx="1.500" fill="#999" />
        <rect x="2.500" y="6" width="11" height="5.500" rx="2.500" fill="#161c24" />
        <path d="M4.500 8H7M9 8H11.500M5 10H11" stroke="#29a9f0" strokeWidth="1.300" />
        <path d="M4 13H12L10 15.500H6Z" fill="#555" />
      </svg>
    </SideButton>
    <SideButton $on>
      <svg width="16" height="18" viewBox="0 0 16 18">
        <path d="M8 8V17" stroke="#5a6f90" strokeWidth="1.800" />
        <circle cx="8" cy="5.500" r="4.700" fill="#ef7d35" />
        <circle cx="7" cy="4" r="1.600" fill="#f9b184" />
      </svg>
    </SideButton>
    <SideButton $on>
      <svg width="16" height="16" viewBox="0 0 16 16">
        <circle cx="8" cy="8" r="6.700" fill="#fff" stroke="#4556c8" strokeWidth="1.300" />
        <path d="M6.300 7H8.500V11.500M6.300 11.500H10" stroke="#2a3ab0" strokeWidth="1.600" fill="none" />
        <rect x="7.200" y="3.500" width="1.900" height="1.900" fill="#2a3ab0" />
      </svg>
    </SideButton>
    <SideButton>
      <svg width="16" height="16" viewBox="0 0 16 16">
        <rect width="16" height="16" fill="#f6de12" />
        <path d="M0 16Q3 10 9 9L7 16Z" fill="#45b8e6" />
        <ellipse cx="8" cy="4" rx="6.500" ry="2.300" fill="#d6a12a" stroke="#7e4a14" strokeWidth="1.500" />
        <path d="M13 7V14" stroke="#9fd9ee" strokeWidth="2" />
      </svg>
    </SideButton>
  </SideBar>
);

/* ---------- right panel ---------- */

const ToolbarRow = styled.div`
  display: flex;
  justify-content: flex-end;
  padding: 1px 5px 0 0;
  border-top: 1px solid #f6f6f6;
`;

const Combo = styled.div`
  display: flex;
  width: 293px;
  height: 25px;
  background: #57b667;
  line-height: 26px;
  padding-left: 4px;
  justify-content: space-between;
`;

const ComboButton = styled.div`
  display: flex;
  align-items: center;
  justify-content: center;
  width: 25px;
  height: 25px;
  border: 1px solid #808080;
  box-shadow: inset 1px 1px 0 #fff, inset -1px -1px 0 #aaa;
  background: #e4e4e4;
`;

const Workspace = styled.div`
  display: grid;
  grid-template-columns: 29px 1027px 309px;
`;

const SidePanel = styled.div`
  display: flex;
  flex-direction: column;
  padding: 3px 6px 0 9px;
  border-top: 1px solid #888;
  background: #e1e1e1;
`;

const PanelTop = styled.div`
  display: flex;
  justify-content: space-between;
  height: 50px;
`;

const PlanTitle = styled.div`
  font-family: "DejaVu Sans Condensed", "DejaVu Sans", sans-serif;
  font-stretch: condensed;
  font-size: 10px;
  font-weight: 700;
  line-height: 12px;
  letter-spacing: -0.1px;
`;

const PlanIcons = styled.div`
  display: flex;
  align-items: center;
  gap: 6px;
  height: 38px;
  padding-left: 3px;
`;

const ArrowSlot = styled.div`
  padding: 0 3px;
`;

const AbortButton = styled.div`
  display: flex;
  align-items: center;
  justify-content: center;
  width: 56px;
  height: 50px;
  border: 1px solid #777;
  border-radius: 3px;
  background: repeating-linear-gradient(45deg, #111 0 6.500px, #ffe13a 6.500px 11.500px);
`;

const AbortLabel = styled.div`
  width: 36px;
  height: 30px;
  border-radius: 5px;
  background: rgba(222, 28, 28, 0.83);
  color: #ffd63c;
  font-weight: 700;
  text-align: center;
  line-height: 28px;
  text-indent: -1px;
`;

const Facts = styled.div`
  display: grid;
  grid-template-columns: 78px 1fr;
  grid-auto-rows: 21px;
  align-items: center;
  height: 112px;
  padding-top: 3px;
`;

const FactName = styled.div`
  font-weight: 700;
  letter-spacing: 0.2px;
`;

const FactValue = styled.div<{ $bad?: boolean }>`
  ${(p) => p.$bad && css`font-weight: 700; letter-spacing: 0.25px; color: #cc0018;`}
`;

const TreeBox = styled.div`
  display: flex;
  width: 294px;
  height: 488px;
  border: 1px solid #808080;
  border-right: 0;
  background: #fff;
`;

const TreeRows = styled.div`
  flex: 1;
`;

const TreeRow = styled.div<{ $gap?: number }>`
  display: flex;
  align-items: center;
  gap: ${(p) => p.$gap ?? 4}px;
  height: 18px;
  > :first-child { margin-right: -${(p) => p.$gap ?? 4}px; }
`;

/* Dotted guide lines in front of a tree node. */
const TreeLines = ({ paths, box }: { paths: string; box?: boolean }) => (
  <svg width={paths.includes("H40") ? 40 : 20} height="18" fill="none" stroke="#777" strokeDasharray="1 1">
    <path d={paths} />
    {box && (
      <g strokeDasharray="none">
        <rect x="3.500" y="5.500" width="8" height="8" fill="#eee" stroke="#777" />
        <path d="M5.500 9.500H10" stroke="#000" />
      </g>
    )}
  </svg>
);

const TreeGap = styled.div`
  height: 90px;
`;

const plans: [string, string, number][] = [
  ["marina-out", "#a35cf6", 0.1],
  ["preSurvey", "#0ee212", 0.2],
  ["profiling_1000rpmv2", "#a35cf6", 0.1],
  ["safe1", "#0ee212", 0.2],
  ["safe2", "#0ee212", 0.2],
  ["safe3", "#0ee212", 0.2],
  ["safe4", "#0ee212", 0.2],
  ["safe5", "#0ee212", 0.2],
  ["surface", "#a35cf6", 0.4],
  ["testLBL", "#a35cf6", 0.15],
];

const RightPanel = () => (
  <SidePanel>
    <PanelTop>
      <div>
        <PlanTitle>Plan Control</PlanTitle>
        <PlanIcons>
          <Antenna arrow />
          <ArrowSlot><UpArrow /></ArrowSlot>
          <Runner />
          <StopSign />
          <Gamepad />
        </PlanIcons>
      </div>
      <AbortButton>
        <AbortLabel>Abort</AbortLabel>
      </AbortButton>
    </PanelTop>
    <Facts>
      <FactName>State:</FactName><FactValue>READY</FactValue>
      <FactName>Plan:</FactName><FactValue>follow_ntnu</FactValue>
      <FactName>Man.:</FactName><FactValue />
      <FactName>Outcome:</FactName><FactValue $bad>Failure</FactValue>
    </Facts>
    <TreeBox>
      <TreeRows>
        <TreeRow $gap={3}>
          <TreeLines paths="M7.500 10V18M8 9.500H20" />
          <House />
          <Run $ls={0.25}>41N8.3305, 8W40.975667</Run>
        </TreeRow>
        <TreeRow $gap={3}>
          <TreeLines paths="M7.500 0V18M8 9.500H20" box />
          <FolderOpen />
          <Run $ls={0.5}>Transponders</Run>
        </TreeRow>
        <TreeRow $gap={3}>
          <TreeLines paths="M7.500 0V18M27.500 0V18M28 9.500H40" />
          <Antenna />
          <Run $ls={0.45}>benthos2</Run>
        </TreeRow>
        <TreeRow $gap={3}>
          <TreeLines paths="M7.500 0V18M27.500 0V10M28 9.500H40" />
          <Antenna />
          <Run $ls={0.45}>benthos3</Run>
        </TreeRow>
        <TreeRow $gap={3}>
          <TreeLines paths="M7.500 0V9M8 9.500H20" box />
          <FolderOpen />
          <Run $ls={0.4}>Plans</Run>
        </TreeRow>
        <TreeRow>
          <TreeLines paths="M27.500 0V18M28 9.500H40" />
          <PlanIcon color="#d8d8d8" />
          <Run $ls={0.3}>angles</Run>
        </TreeRow>
        <TreeGap />
        {plans.map(([name, color, ls]) => (
          <TreeRow key={name}>
            <TreeLines paths="M27.500 0V18M28 9.500H40" />
            <PlanIcon color={color} />
            <Run $ls={ls}>{name}</Run>
          </TreeRow>
        ))}
      </TreeRows>
      <Scrollbar dir="v" before={2} size={440} />
    </TreeBox>
  </SidePanel>
);

/* ---------- log download window ---------- */

const LogRow = styled.div`
  display: flex;
  align-items: center;
  height: 54px;
  padding: 0 0 4px 68px;
`;

const SyncButton = styled.div`
  display: flex;
  align-items: center;
  gap: 7px;
  width: 92px;
  height: 28px;
  margin: 0 12px 0 7px;
  padding-left: 1px;
  background: #e6e6e6;
  white-space: nowrap;
`;

const LogDownload = () => (
  <>
    <DialogShadow $x={1066} $y={319} $w={302} $h={99} />
    <DialogFrame $x={1066} $y={319} $w={300} $h={100}>
      <TitleBar>
        <TitleText $center={139}>Log Download</TitleText>
        <TitleButtons $end={11}>
          <WinGlyph kind="close" color="#b8b8b8" />
        </TitleButtons>
      </TitleBar>
      <LogRow>
        <BookIcon />
        <SyncButton><SyncIcon /><Run $ls={0.15}>Sync Logs</Run></SyncButton>
        <DownFolder w={26} h={29} />
      </LogRow>
    </DialogFrame>
  </>
);

/* ---------- notification ---------- */

const Toast = styled(Float)`
  display: flex;
  align-items: center;
  gap: 11px;
  padding: 0 0 2px 11px;
  border: 1px solid #b94a48;
  background: #f2dede;
  color: #3b3b3b;
  line-height: 15px;
`;

const ToastText = styled.div`
  padding-top: 3px;
  white-space: nowrap;
`;

const ToastLine = styled.div<{ $ls: number; $italic?: boolean }>`
  height: 15px;
  letter-spacing: ${(p) => p.$ls}px;
  font-style: ${(p) => (p.$italic ? "italic" : "normal")};
`;

const Notification = () => (
  <Toast $x={861} $y={600} $w={500} $h={105}>
    <svg width="30" height="32" viewBox="0 0 30 32">
      <ellipse cx="15" cy="16" rx="14.800" ry="16" fill="#b94a48" />
      <path d="M9 9.500L21 22.500M21 9.500L9 22.500" stroke="#f2dede" strokeWidth="4.200" strokeLinecap="round" />
    </svg>
    <ToastText>
      <ToastLine $ls={0.38}><b>Console</b> Log Book</ToastLine>
      <ToastLine $ls={0.14}>Received 8 previous entries from lauv-xplore-1 including:</ToastLine>
      <ToastLine $ls={0}>...</ToastLine>
      <ToastLine $ls={0.17} $italic>[15:42:06 UTC] [Plan.Engine] reply -- Start Plan (follow_ntnu) --</ToastLine>
      <ToastLine $ls={0.06} $italic>Collisions: Collision detected: Z-Axis</ToastLine>
    </ToastText>
  </Toast>
);

/* ---------- status bar ---------- */

const StatusBar = styled.div`
  display: flex;
  align-items: center;
  gap: 4px;
  border-top: 1px solid #808080;
  border-left: 3px solid #c9c9c9;
  padding: 0 5px 0 1px;
  background: #e1e1e1;
`;

const StatusName = styled.b<{ $before?: number }>`
  margin-left: ${(p) => p.$before ?? 0}px;
  letter-spacing: 0.15px;
`;

const Clock = styled.span`
  margin-left: auto;
  letter-spacing: 0.2px;
`;

const NotifyButton = styled.div`
  width: 130px;
  height: 21px;
  margin-left: 1px;
  border: 1px solid #808080;
  border-radius: 2px;
  background: linear-gradient(#f2f2f2, #c8c8c8);
  font-weight: 700;
  letter-spacing: 0.17px;
  text-align: center;
  line-height: 19px;
`;

const BottomEdge = styled.div`
  background: linear-gradient(#f4f4f4 0 1px, #b9b9b9 1px 3px);
`;

export default function App() {
  return (
    <Desktop>
      <GlobalStyle />
      <MainWindow>
        <TitleBar>
          <TitleText $right={1037}>o/drip-TNA_STAI.nmisz]</TitleText>
          <TitleButtons $end={12}>
            <WinGlyph kind="min" color="#bdbdbd" />
            <WinGlyph kind="max" color="#bdbdbd" />
            <WinGlyph kind="close" color="#bdbdbd" />
          </TitleButtons>
        </TitleBar>
        <ToolbarRow>
          <Combo>
            LAUV-XPLORE-1: SERVICE
            <ComboButton>
              <svg width="13" height="7"><path d="M0 0H13L6.500 7Z" fill="#808080" /></svg>
            </ComboButton>
          </Combo>
        </ToolbarRow>
        <Workspace>
          <SideTools />
          <MapView />
          <RightPanel />
        </Workspace>
        <StatusBar>
          <StatusName>System:</StatusName>
          <span>lauv-xplore-1</span>
          <StatusName $before={2}>Plan:</StatusName>
          <span>cmd-lauv-xplore-1</span>
          <Clock>15:44 UTC</Clock>
          <NotifyButton>109 Notifications</NotifyButton>
        </StatusBar>
        <BottomEdge />
      </MainWindow>
      <DownloadDialog />
      <LogDownload />
      <Notification />
    </Desktop>
  );
}
